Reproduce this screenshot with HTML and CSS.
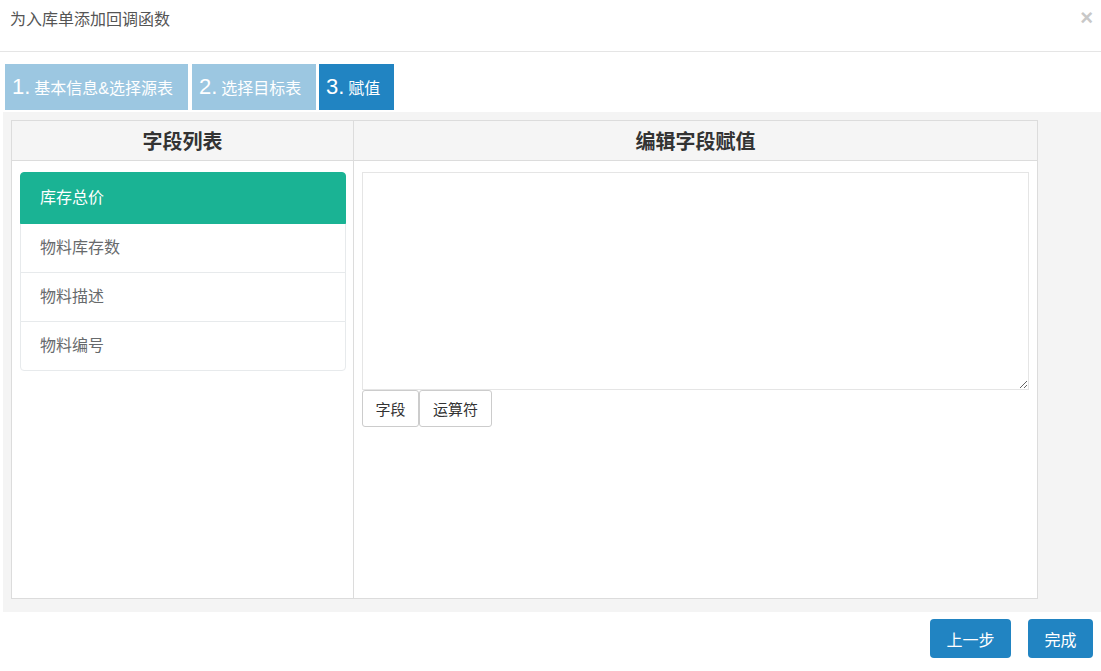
FILE: index.html
```html
<!DOCTYPE html>
<html lang="zh-CN">
<head>
<meta charset="utf-8">
<title>为入库单添加回调函数</title>
<link rel="stylesheet" href="styles.css">
</head>
<body>
<div class="modal">
  <div class="modal-header">
    <span class="modal-title">为入库单添加回调函数</span>
    <span class="close">×</span>
  </div>
  <div class="steps">
    <div class="step s1"><span class="num">1.</span><span class="label">基本信息&amp;选择源表</span></div>
    <div class="step s2"><span class="num">2.</span><span class="label">选择目标表</span></div>
    <div class="step s3 current"><span class="num">3.</span><span class="label">赋值</span></div>
  </div>
  <div class="panel">
    <div class="grid">
      <div class="th th-left">字段列表</div>
      <div class="th th-right">编辑字段赋值</div>
      <div class="td td-left">
        <ul class="list">
          <li class="item active">库存总价</li>
          <li class="item">物料库存数</li>
          <li class="item">物料描述</li>
          <li class="item">物料编号</li>
        </ul>
      </div>
      <div class="td td-right">
        <textarea class="editor"></textarea>
        <div class="tools">
          <button class="tool">字段</button><button class="tool">运算符</button>
        </div>
      </div>
    </div>
  </div>
  <div class="footer">
    <button class="btn btn-prev">上一步</button>
    <button class="btn btn-done">完成</button>
  </div>
</div>
</body>
</html>
```
FILE: styles.css
```css
* { box-sizing: border-box; }
html, body { margin: 0; padding: 0; background: #fff; }
body {
  font-family: "Liberation Sans", "Noto Sans CJK SC", sans-serif;
  color: #676a6c;
  width: 1101px;
  height: 671px;
  overflow: hidden;
}
.modal-header {
  height: 52px;
  border-bottom: 1px solid #e5e5e5;
  padding: 9px 8px 0 10px;
  display: flex;
  justify-content: space-between;
  align-items: flex-start;
}
.modal-title {
  font-size: 16px;
  line-height: 22px;
  color: #555;
}
.close {
  font-size: 22px;
  font-weight: bold;
  line-height: 18px;
  color: #c8c8c8;
}
.steps {
  display: flex;
  margin: 12px 0 2px 5px;
}
.step {
  height: 46px;
  display: flex;
  align-items: baseline;
  padding: 10px 0 0 7px;
  background: #9cc7e1;
  color: #fff;
}
.s1 { width: 183px; }
.s2 { width: 124px; margin-left: 4px; }
.s3 { width: 75px; margin-left: 3px; }
.step.current { background: #2184c2; }
.step .num { font-size: 22px; line-height: 26px; margin-right: 4px; }
.step .label { font-size: 16px; line-height: 26px; }
.panel {
  margin-left: 3px;
  background: #f4f4f4;
  padding: 8px 8px 13px 8px;
  height: 500px;
}
.grid {
  width: 1027px;
  height: 479px;
  display: grid;
  grid-template-columns: 342px 1fr;
  grid-template-rows: 40px 1fr;
  border: 1px solid #dcdcdc;
  background: #fff;
}
.th {
  background: #f5f5f5;
  border-bottom: 1px solid #dcdcdc;
  font-size: 20px;
  font-weight: bold;
  color: #333;
  display: flex;
  align-items: center;
  justify-content: center;
}
.th-left, .td-left { border-right: 1px solid #dcdcdc; }
.td { padding: 11px 8px 8px 8px; }
.td-left { padding-right: 7px; }
.list {
  list-style: none;
  margin: 0;
  padding: 0;
}
.item {
  height: 50px;
  line-height: 48px;
  padding: 0 19px;
  font-size: 16px;
  color: #676a6c;
  border: 1px solid #e7eaec;
  margin-bottom: -1px;
  background: #fff;
}
.item:first-child { border-radius: 4px 4px 0 0; }
.item:last-child { border-radius: 0 0 4px 4px; }
.item.active {
  background: #1ab394;
  border-color: #1ab394;
  color: #fff;
  height: 52px;
  line-height: 50px;
  position: relative;
}
.td-right { padding-right: 8px; }
.editor {
  display: block;
  width: 667px;
  height: 218px;
  border: 1px solid #e5e5e5;
  margin: 0;
  padding: 6px;
  resize: vertical;
  font-family: inherit;
}
.tools { display: flex; }
.tool {
  height: 37px;
  padding: 0 12px;
  font-size: 15px;
  font-family: inherit;
  color: #333;
  background: #fff;
  border: 1px solid #ccc;
  border-radius: 3px;
  cursor: pointer;
}
.tools .tool:first-child { width: 57px; }
.tools .tool:last-child { width: 73px; }
.footer {
  display: flex;
  justify-content: flex-end;
  gap: 17px;
  padding: 7px 8px 0 0;
}
.btn {
  height: 39px;
  padding: 0;
  font-size: 16px;
  font-family: inherit;
  color: #fff;
  background: #2184c2;
  border: none;
  border-radius: 4px;
}
.btn-prev { width: 81px; }
.btn-done { width: 65px; }
```
